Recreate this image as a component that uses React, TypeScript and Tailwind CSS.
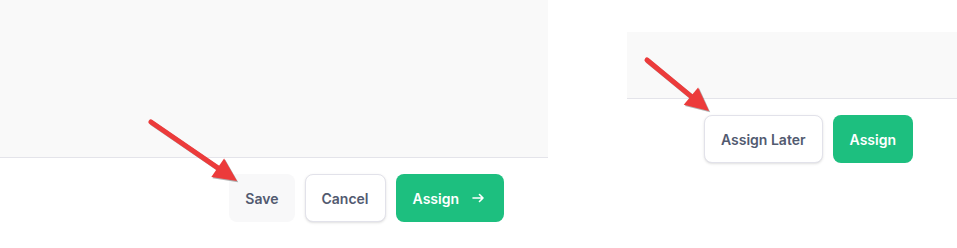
import React from "react";

function Arrow({ x1, y1, x2, y2 }: { x1: number; y1: number; x2: number; y2: number }) {
  const ang = Math.atan2(y2 - y1, x2 - x1);
  const len = 26;
  const spread = 0.45;
  const ax = x2 - len * Math.cos(ang - spread);
  const ay = y2 - len * Math.sin(ang - spread);
  const bx = x2 - len * Math.cos(ang + spread);
  const by = y2 - len * Math.sin(ang + spread);
  const ex = x2 - 18 * Math.cos(ang);
  const ey = y2 - 18 * Math.sin(ang);
  return (
    <g>
      <g transform="translate(1.2,1.2)" opacity="0.35">
        <line x1={x1} y1={y1} x2={ex} y2={ey} stroke="#222" strokeWidth="5" strokeLinecap="round" />
        <polygon points={`${x2},${y2} ${ax},${ay} ${bx},${by}`} fill="#222" />
      </g>
      <line x1={x1} y1={y1} x2={ex} y2={ey} stroke="#ec3b3b" strokeWidth="5" strokeLinecap="round" />
      <polygon points={`${x2},${y2} ${ax},${ay} ${bx},${by}`} fill="#ec3b3b" />
    </g>
  );
}

export default function App() {
  return (
    <div
      className="relative w-[957px] h-[248px] bg-white overflow-hidden flex"
      style={{ fontFamily: "Inter, 'Noto Sans', sans-serif" }}
    >
      <div className="w-[548px] flex flex-col">
        <div className="h-[158px] bg-[#f9f9f9] border-b border-[#e4e4ea]" />
        <div className="flex justify-end gap-[10px] pt-[16px] pr-[44px]">
          <button className="h-12 px-4 rounded-lg bg-[#f8f8f9] text-[14px] font-semibold text-[#525a70]">
            Save
          </button>
          <button className="h-12 px-4 rounded-lg bg-white border border-[#e2e2ea] shadow-sm text-[14px] font-semibold text-[#525a70]">
            Cancel
          </button>
          <button className="h-12 pl-[17px] pr-[20px] rounded-lg bg-[#1dbf7f] text-[14px] font-semibold text-white flex items-center gap-[13px]">
            Assign
            <svg width="12" height="10" viewBox="0 0 12 10" fill="none">
              <path d="M1 5h10M7.5 1.5l3.5 3.5-3.5 3.5" stroke="white" strokeWidth="1.6" strokeLinecap="round" strokeLinejoin="round" />
            </svg>
          </button>
        </div>
      </div>
      <div className="ml-[79px] flex-1 flex flex-col pt-[32px]">
        <div className="h-[67px] bg-[#f9f9f9] border-b border-[#e4e4ea]" />
        <div className="flex justify-end gap-[10px] pt-[16px] pr-[44px]">
          <button className="h-12 px-4 rounded-lg bg-white border border-[#e2e2ea] shadow-sm text-[14px] font-semibold text-[#525a70]">
            Assign Later
          </button>
          <button className="h-12 px-[17px] rounded-lg bg-[#1dbf7f] text-[14px] font-semibold text-white">
            Assign
          </button>
        </div>
      </div>
      <svg className="absolute inset-0 pointer-events-none" width="957" height="248">
        <Arrow x1={151} y1={122} x2={237} y2={181} />
        <Arrow x1={647} y1={60} x2={709} y2={111} />
      </svg>
    </div>
  );
}
